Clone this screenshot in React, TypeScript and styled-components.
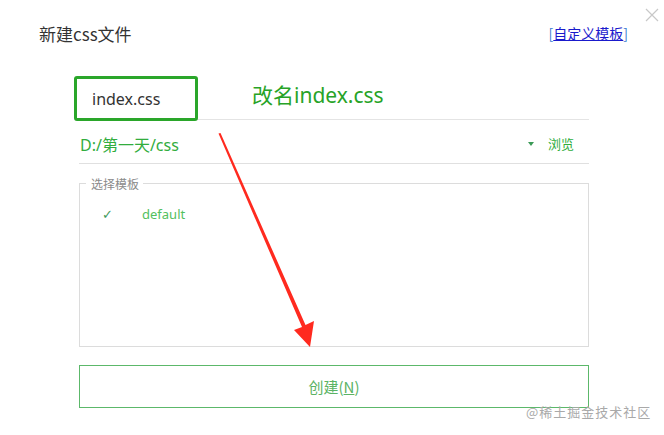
import React from "react";
import { styled, createGlobalStyle } from "styled-components";

const GlobalStyle = createGlobalStyle`
  html, body {
    margin: 0;
    padding: 0;
    background: #ffffff;
  }
  body {
    font-family: "Noto Sans", "Noto Sans CJK SC", sans-serif;
  }
`;

const App = () => {
  return (
    <>
      <GlobalStyle />
      <Dialog>
        <Header>
          <Title>新建css文件</Title>
          <CustomLink>
            <Bracket>[</Bracket>
            <LinkText>自定义模板</LinkText>
            <Bracket>]</Bracket>
          </CustomLink>
        </Header>
        <CloseBtn aria-label="close">
          <svg width="14" height="14" viewBox="0 0 14 14">
            <path d="M1 1 L13 13 M13 1 L1 13" stroke="#c8c8c8" strokeWidth="1.2" />
          </svg>
        </CloseBtn>

        <Body>
          <NameRow>
            <NameBox>index.css</NameBox>
            <Note>改名index.css</Note>
          </NameRow>

          <PathRow>
            <PathText>D:/第一天/css</PathText>
            <Caret />
            <Browse>浏览</Browse>
          </PathRow>

          <TemplateSet>
            <Legend>选择模板</Legend>
            <TemplateItem>
              <Check>✓</Check>
              <TemplateName>default</TemplateName>
            </TemplateItem>
          </TemplateSet>

          <CreateButton type="button">
            创建(<u>N</u>)
          </CreateButton>
        </Body>

        <Arrow width="664" height="435" viewBox="0 0 664 435">
          <path
            d="M218.5 133.5 L220.5 133 L305.5 325 L314 321 L310 347 L294 330 L302 327 Z"
            fill="#ff2a1f"
          />
        </Arrow>

        <Watermark>@稀土掘金技术社区</Watermark>
      </Dialog>
    </>
  );
};
export default App;

const Dialog = styled.div`
  position: relative;
  width: 664px;
  height: 435px;
  background: #ffffff;
  overflow: hidden;
`;

const Header = styled.div`
  display: flex;
  align-items: center;
  justify-content: space-between;
  padding: 23px 36px 0 39px;
  height: 22px;
`;

const Title = styled.div`
  font-size: 17px;
  color: #333333;
  line-height: 22px;
  font-family: "Noto Sans CJK SC", sans-serif;
`;

const CustomLink = styled.span`
  font-size: 14px;
  line-height: 18px;
  margin-top: -2px;
  font-family: "Noto Sans CJK SC", sans-serif;
`;

const Bracket = styled.span`
  color: #3a7bd0;
`;

const LinkText = styled.span`
  color: #1a1acc;
  text-decoration: underline;
`;

const CloseBtn = styled.div`
  position: absolute;
  top: 8px;
  right: 5px;
  width: 14px;
  height: 14px;
  line-height: 0;
`;

const Body = styled.div`
  padding: 31px 75px 0 79px;
  display: flex;
  flex-direction: column;
`;

const NameRow = styled.div`
  display: flex;
  align-items: flex-start;
  height: 43px;
  border-bottom: 1px solid #e4e4e4;
`;

const NameBox = styled.div`
  box-sizing: border-box;
  flex: none;
  width: 124px;
  height: 45px;
  margin-left: -5px;
  border: 3px solid #2aa62a;
  border-radius: 3px;
  padding-left: 15px;
  display: flex;
  align-items: center;
  font-size: 16px;
  color: #333333;
  background: #ffffff;
`;

const Note = styled.div`
  margin-left: 54px;
  margin-top: 5px;
  font-size: 21px;
  line-height: 28px;
  color: #27a327;
`;

const PathRow = styled.div`
  display: flex;
  align-items: center;
  height: 44px;
  box-sizing: border-box;
  padding-top: 4px;
  border-bottom: 1px solid #e0e0e0;
  padding-right: 15px;
`;

const PathText = styled.div`
  flex: 1;
  padding-left: 1px;
  font-size: 16px;
  color: #32ad3e;
  font-family: "Noto Sans", "Noto Sans CJK SC", sans-serif;
`;

const Caret = styled.span`
  width: 0;
  height: 0;
  border-left: 3px solid transparent;
  border-right: 3px solid transparent;
  border-top: 4px solid #3a9a56;
  margin-right: 14px;
`;

const Browse = styled.span`
  font-size: 13px;
  color: #2fae3c;
  font-family: "Noto Sans CJK SC", sans-serif;
`;

const TemplateSet = styled.fieldset`
  margin: 11px 0 0 0;
  padding: 11px 0 0 0;
  height: 172px;
  box-sizing: border-box;
  border: 1px solid #dcdcdc;
  min-inline-size: 0;
`;

const Legend = styled.legend`
  margin-left: 6px;
  padding: 0 4px 0 5px;
  font-size: 12px;
  color: #8a8a8a;
  font-family: "Noto Sans CJK SC", sans-serif;
`;

const TemplateItem = styled.div`
  display: flex;
  align-items: center;
  height: 22px;
  padding-left: 22px;
`;

const Check = styled.span`
  width: 40px;
  font-size: 13px;
  color: #3f9a5c;
  font-family: "DejaVu Sans", sans-serif;
`;

const TemplateName = styled.span`
  font-size: 13px;
  color: #52c05e;
`;

const CreateButton = styled.button`
  margin-top: 18px;
  height: 43px;
  width: 100%;
  box-sizing: border-box;
  background: #ffffff;
  border: 1px solid #5cb86a;
  color: #5bb364;
  font-size: 15px;
  font-family: "Noto Sans CJK SC", sans-serif;
  cursor: pointer;
  padding: 0;
`;

const Arrow = styled.svg`
  position: absolute;
  left: 0;
  top: 0;
  pointer-events: none;
`;

const Watermark = styled.div`
  position: absolute;
  left: 526px;
  top: 402px;
  font-size: 13px;
  line-height: 20px;
  color: #a9a9a9;
  font-family: "Noto Sans CJK SC", sans-serif;
  letter-spacing: 1px;
`;
